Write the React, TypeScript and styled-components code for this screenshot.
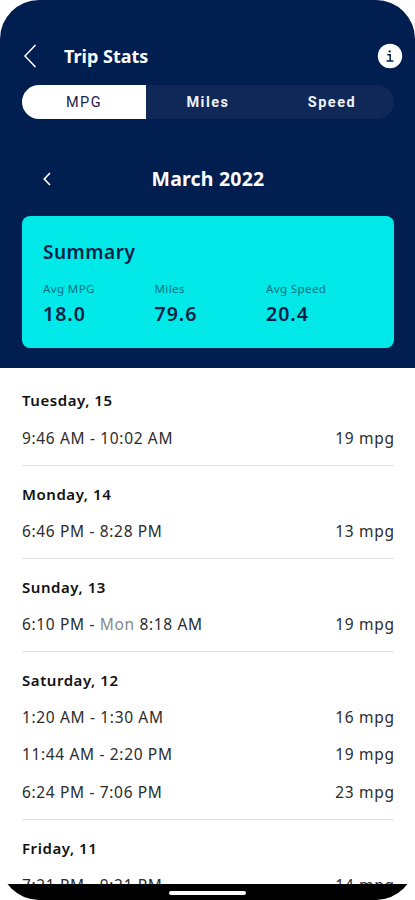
import React from 'react';
import styled, { createGlobalStyle } from 'styled-components';

const GlobalStyle = createGlobalStyle`
  * { box-sizing: border-box; }
  body { margin: 0; background: #fff; font-family: "Noto Sans", sans-serif; }
  button { font: inherit; border: 0; padding: 0; background: none; color: inherit; }
`;

const Screen = styled.div`
  width: 415px;
  height: 900px;
  display: flex;
  flex-direction: column;
  overflow: hidden;
  background: #fff;
  border-radius: 39px;
`;

const Hero = styled.header`
  flex: none;
  height: 368px;
  padding: 0 21px 0 22px;
  background: #001e50;
  color: #fff;
`;

const TitleBar = styled.div`
  display: flex;
  align-items: center;
  height: 85px;
  padding-top: 27px;
  margin-right: -9px;
`;

const BackButton = styled.button`
  display: flex;
  width: 42px;
  padding-left: 1px;
`;

const Title = styled.h1`
  flex: 1;
  margin: 0;
  font-size: 18px;
  line-height: 24px;
  font-weight: 700;
`;

const InfoButton = styled.button`
  display: flex;
`;

const Tabs = styled.nav`
  display: grid;
  grid-template-columns: repeat(3, 1fr);
  height: 34px;
  overflow: hidden;
  border-radius: 17px;
  background: #0f2857;
`;

const Tab = styled.button<{ $active?: boolean }>`
  font-family: Roboto, sans-serif;
  font-size: 14.5px;
  letter-spacing: 1.5px;
  font-weight: ${(p) => (p.$active ? 400 : 700)};
  color: ${(p) => (p.$active ? '#1b2050' : '#eef1f8')};
  background: ${(p) => (p.$active ? '#fff' : 'transparent')};
`;

const MonthBar = styled.div`
  display: grid;
  grid-template-columns: 50px 1fr 50px;
  align-items: center;
  height: 97px;
  padding-top: 22px;
`;

const MonthButton = styled.button`
  display: flex;
  padding-left: 18px;
`;

const Month = styled.h2`
  margin: 0;
  text-align: center;
  font-size: 19.5px;
  line-height: 26px;
  font-weight: 700;
  letter-spacing: 0.2px;
`;

const Card = styled.section`
  height: 132px;
  padding: 22px 21px 0;
  border-radius: 8px;
  background: #00e8e7;
  color: #051e46;
`;

const CardTitle = styled.h3`
  margin: 0;
  font-size: 19px;
  line-height: 28px;
  font-weight: 600;
  letter-spacing: 0.5px;
`;

const Stats = styled.dl`
  display: grid;
  grid-template-columns: repeat(3, 111.5px);
  margin: 15px 0 0;
`;

const StatLabel = styled.dt`
  font-size: 11.5px;
  line-height: 16px;
  letter-spacing: 0.4px;
  color: #08717f;
`;

const StatValue = styled.dd`
  margin: 4px 0 0;
  font-size: 19.5px;
  line-height: 26px;
  font-weight: 600;
  letter-spacing: 1px;
`;

const TripList = styled.main`
  flex: 1;
  min-height: 0;
  overflow: hidden;
  padding: 4.6px 21px 0 22px;
  color: #2c2c2c;
`;

const Day = styled.section`
  padding: 9.8px 0 8px;
  border-bottom: 1px solid #dfe2e4;
`;

const DayTitle = styled.h4`
  margin: 0;
  font-size: 15px;
  line-height: 37.2px;
  font-weight: 600;
  letter-spacing: 0.55px;
  color: #111;
`;

const Trip = styled.div`
  display: flex;
  justify-content: space-between;
  margin-right: -0.6px;
  font-size: 15.5px;
  line-height: 37.2px;
  letter-spacing: 0.65px;
`;

const NextDay = styled.span`
  color: #85898c;
`;

const HomeBar = styled.footer`
  flex: none;
  display: flex;
  justify-content: center;
  height: 16px;
  padding-top: 7px;
  background: #000;
`;

const HomeIndicator = styled.span`
  width: 77px;
  height: 4px;
  border-radius: 2px;
  background: #fff;
`;

interface TripData { start: string; end: string; mpg: number; endDay?: string }

const days: { title: string; trips: TripData[] }[] = [
  { title: 'Tuesday, 15', trips: [{ start: '9:46 AM', end: '10:02 AM', mpg: 19 }] },
  { title: 'Monday, 14', trips: [{ start: '6:46 PM', end: '8:28 PM', mpg: 13 }] },
  { title: 'Sunday, 13', trips: [{ start: '6:10 PM', end: '8:18 AM', mpg: 19, endDay: 'Mon' }] },
  {
    title: 'Saturday, 12',
    trips: [
      { start: '1:20 AM', end: '1:30 AM', mpg: 16 },
      { start: '11:44 AM', end: '2:20 PM', mpg: 19 },
      { start: '6:24 PM', end: '7:06 PM', mpg: 23 },
    ],
  },
  { title: 'Friday, 11', trips: [{ start: '7:21 PM', end: '9:21 PM', mpg: 14 }] },
];

const stats = [
  ['Avg MPG', '18.0'],
  ['Miles', '79.6'],
  ['Avg Speed', '20.4'],
];

export default function App() {
  return (
    <>
      <GlobalStyle />
      <Screen>
        <Hero>
          <TitleBar>
            <BackButton aria-label="Back">
              <svg width="14" height="24" viewBox="0 0 14 24" fill="none" stroke="#fff" strokeWidth="1.5">
                <path d="M12.5 1L2 12L12.5 23" />
              </svg>
            </BackButton>
            <Title>Trip Stats</Title>
            <InfoButton aria-label="Info">
              <svg width="26" height="26" viewBox="0 0 26 26">
                <circle cx="13" cy="13" r="12.2" fill="#fff" />
                <circle cx="12.7" cy="8.4" r="1.1" fill="#001e50" />
                <path d="M10.3 11.8H13.2V17.8M9.6 17.9H16.4" fill="none" stroke="#001e50" strokeWidth="1.5" />
              </svg>
            </InfoButton>
          </TitleBar>
          <Tabs>
            <Tab $active>MPG</Tab>
            <Tab>Miles</Tab>
            <Tab>Speed</Tab>
          </Tabs>
          <MonthBar>
            <MonthButton aria-label="Previous month">
              <svg width="12" height="14" viewBox="0 0 12 14" fill="none" stroke="#fff" strokeWidth="1.7">
                <path d="M10 1L4.3 7L10 13" />
              </svg>
            </MonthButton>
            <Month>March 2022</Month>
          </MonthBar>
          <Card>
            <CardTitle>Summary</CardTitle>
            <Stats>
              {stats.map(([label, value]) => (
                <div key={label}>
                  <StatLabel>{label}</StatLabel>
                  <StatValue>{value}</StatValue>
                </div>
              ))}
            </Stats>
          </Card>
        </Hero>
        <TripList>
          {days.map((day) => (
            <Day key={day.title}>
              <DayTitle>{day.title}</DayTitle>
              {day.trips.map((trip) => (
                <Trip key={trip.start}>
                  <span>
                    {trip.start} - {trip.endDay && <NextDay>{trip.endDay} </NextDay>}
                    {trip.end}
                  </span>
                  <span>{trip.mpg} mpg</span>
                </Trip>
              ))}
            </Day>
          ))}
        </TripList>
        <HomeBar>
          <HomeIndicator />
        </HomeBar>
      </Screen>
    </>
  );
}
